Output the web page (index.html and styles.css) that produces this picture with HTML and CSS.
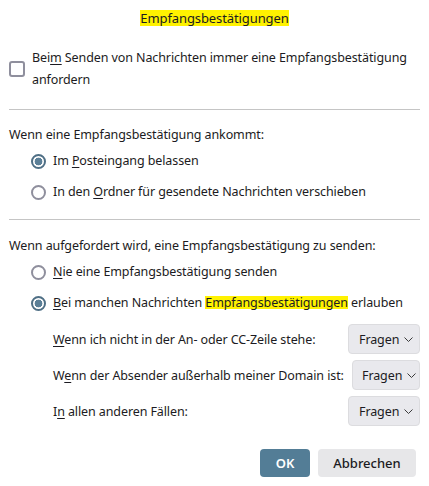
FILE: index.html
```html
<!DOCTYPE html>
<html lang="de">
<head>
<meta charset="utf-8">
<title>Empfangsbestätigungen</title>
<link rel="stylesheet" href="styles.css">
</head>
<body>
<div class="dialog">
  <h1 class="title"><span class="mark">Empfangsbestätigungen</span></h1>

  <label class="check-row">
    <span class="checkbox"></span>
    <span class="check-text">Bei<u>m</u> Senden von Nachrichten immer eine Empfangsbestätigung anfordern</span>
  </label>

  <hr class="sep">

  <p class="heading heading-first">Wenn eine Empfangsbestätigung ankommt:</p>
  <div class="radios">
    <label class="radio-row"><span class="radio checked"></span><span>Im <u>P</u>osteingang belassen</span></label>
    <label class="radio-row"><span class="radio"></span><span>In den <u>O</u>rdner für gesendete Nachrichten verschieben</span></label>
  </div>

  <hr class="sep sep-second">

  <p class="heading heading-second">Wenn aufgefordert wird, eine Empfangsbestätigung zu senden:</p>
  <div class="radios">
    <label class="radio-row"><span class="radio"></span><span><u>N</u>ie eine Empfangsbestätigung senden</span></label>
    <label class="radio-row"><span class="radio checked"></span><span><u>B</u>ei manchen Nachrichten <span class="mark mark-inline">Empfangsbestätigungen</span> erlauben</span></label>
  </div>

  <div class="rules">
    <div class="rule-row">
      <span class="rule-label"><u>W</u>enn ich nicht in der An- oder CC-Zeile stehe:</span>
      <span class="select"><span>Fragen</span><svg class="chev" viewBox="0 0 9 5" width="9" height="5"><path d="M0.5 0.5 L4.5 4.5 L8.5 0.5" fill="none" stroke="#3b3b3b" stroke-width="1"/></svg></span>
    </div>
    <div class="rule-row">
      <span class="rule-label">W<u>e</u>nn der Absender außerhalb meiner Domain ist:</span>
      <span class="select select-narrow"><span>Fragen</span><svg class="chev" viewBox="0 0 9 5" width="9" height="5"><path d="M0.5 0.5 L4.5 4.5 L8.5 0.5" fill="none" stroke="#3b3b3b" stroke-width="1"/></svg></span>
    </div>
    <div class="rule-row">
      <span class="rule-label">I<u>n</u> allen anderen Fällen:</span>
      <span class="select"><span>Fragen</span><svg class="chev" viewBox="0 0 9 5" width="9" height="5"><path d="M0.5 0.5 L4.5 4.5 L8.5 0.5" fill="none" stroke="#3b3b3b" stroke-width="1"/></svg></span>
    </div>
  </div>

  <div class="buttons">
    <button class="btn btn-primary">OK</button>
    <button class="btn btn-cancel">Abbrechen</button>
  </div>
</div>
</body>
</html>
```

FILE: styles.css
```css
html, body {
  margin: 0;
  padding: 0;
  background: #ffffff;
}

body {
  font-family: "Noto Sans", "Open Sans", sans-serif;
  font-size: 12.5px;
  letter-spacing: -0.1px;
  color: #1c1b22;
}

.dialog {
  display: flex;
  flex-direction: column;
  padding: 0 9px;
}

u {
  text-decoration-thickness: 1px;
  text-underline-offset: 2px;
}

.title {
  margin: 8px 0 0;
  font-size: 13px;
  font-weight: normal;
  text-align: center;
  line-height: 20px;
}

.mark {
  display: inline-block;
  background: #fff200;
  line-height: 16px;
}

.mark-inline {
  line-height: 13px;
}

/* checkbox row */
.check-row {
  display: flex;
  align-items: center;
  gap: 7px;
  margin-top: 19px;
}

.checkbox {
  flex: none;
  width: 12px;
  height: 12px;
  border: 2px solid #8f8f9d;
  border-radius: 3px;
}

.check-text {
  line-height: 22px;
}

.sep {
  margin: 18px 0 0;
  border: none;
  border-top: 1px solid #c5c5c5;
  height: 0;
}

.sep-second {
  margin-top: 17px;
}

.heading {
  margin: 15px 0 0;
  line-height: 20px;
}

.heading-second {
  margin-top: 16px;
}

.radios {
  display: flex;
  flex-direction: column;
  gap: 11px;
  margin-top: 6px;
  padding-left: 22px;
}

.radio-row {
  display: flex;
  align-items: center;
  gap: 7px;
  line-height: 20px;
}

.radio {
  flex: none;
  box-sizing: border-box;
  width: 15px;
  height: 15px;
  border: 2px solid #8f8f9d;
  border-radius: 50%;
  background: #fff;
}

.radio.checked {
  border-color: #4f6f85;
  background: radial-gradient(circle, #5b7f97 0 3.6px, #ffffff 4.2px);
}

/* per-case rules */
.rules {
  display: flex;
  flex-direction: column;
  gap: 6px;
  margin-top: 11px;
  padding-left: 44px;
}

.rule-row {
  display: flex;
  align-items: center;
  justify-content: space-between;
  height: 30px;
}

.select {
  box-sizing: border-box;
  width: 72px;
  height: 30px;
  display: flex;
  align-items: center;
  gap: 5px;
  padding: 0 0 0 10px;
  background: #e9e9ed;
  border: 1px solid #dcdcdf;
  border-radius: 4px;
}

.select-narrow {
  width: 68px;
  padding-left: 9px;
}

.chev {
  display: block;
  margin-top: 1px;
}

.buttons {
  display: flex;
  justify-content: flex-end;
  gap: 8px;
  margin-top: 23px;
  padding-right: 4px;
}

.btn {
  box-sizing: border-box;
  height: 28px;
  padding: 0;
  border: none;
  border-radius: 4px;
  background: #e7e7e9;
  color: #1c1b22;
  font-family: inherit;
  font-size: 13px;
  font-weight: 500;
}

.btn-primary {
  width: 50px;
  background: #537d96;
  color: #ffffff;
  font-weight: 600;
}

.btn-cancel {
  width: 98px;
}
```
